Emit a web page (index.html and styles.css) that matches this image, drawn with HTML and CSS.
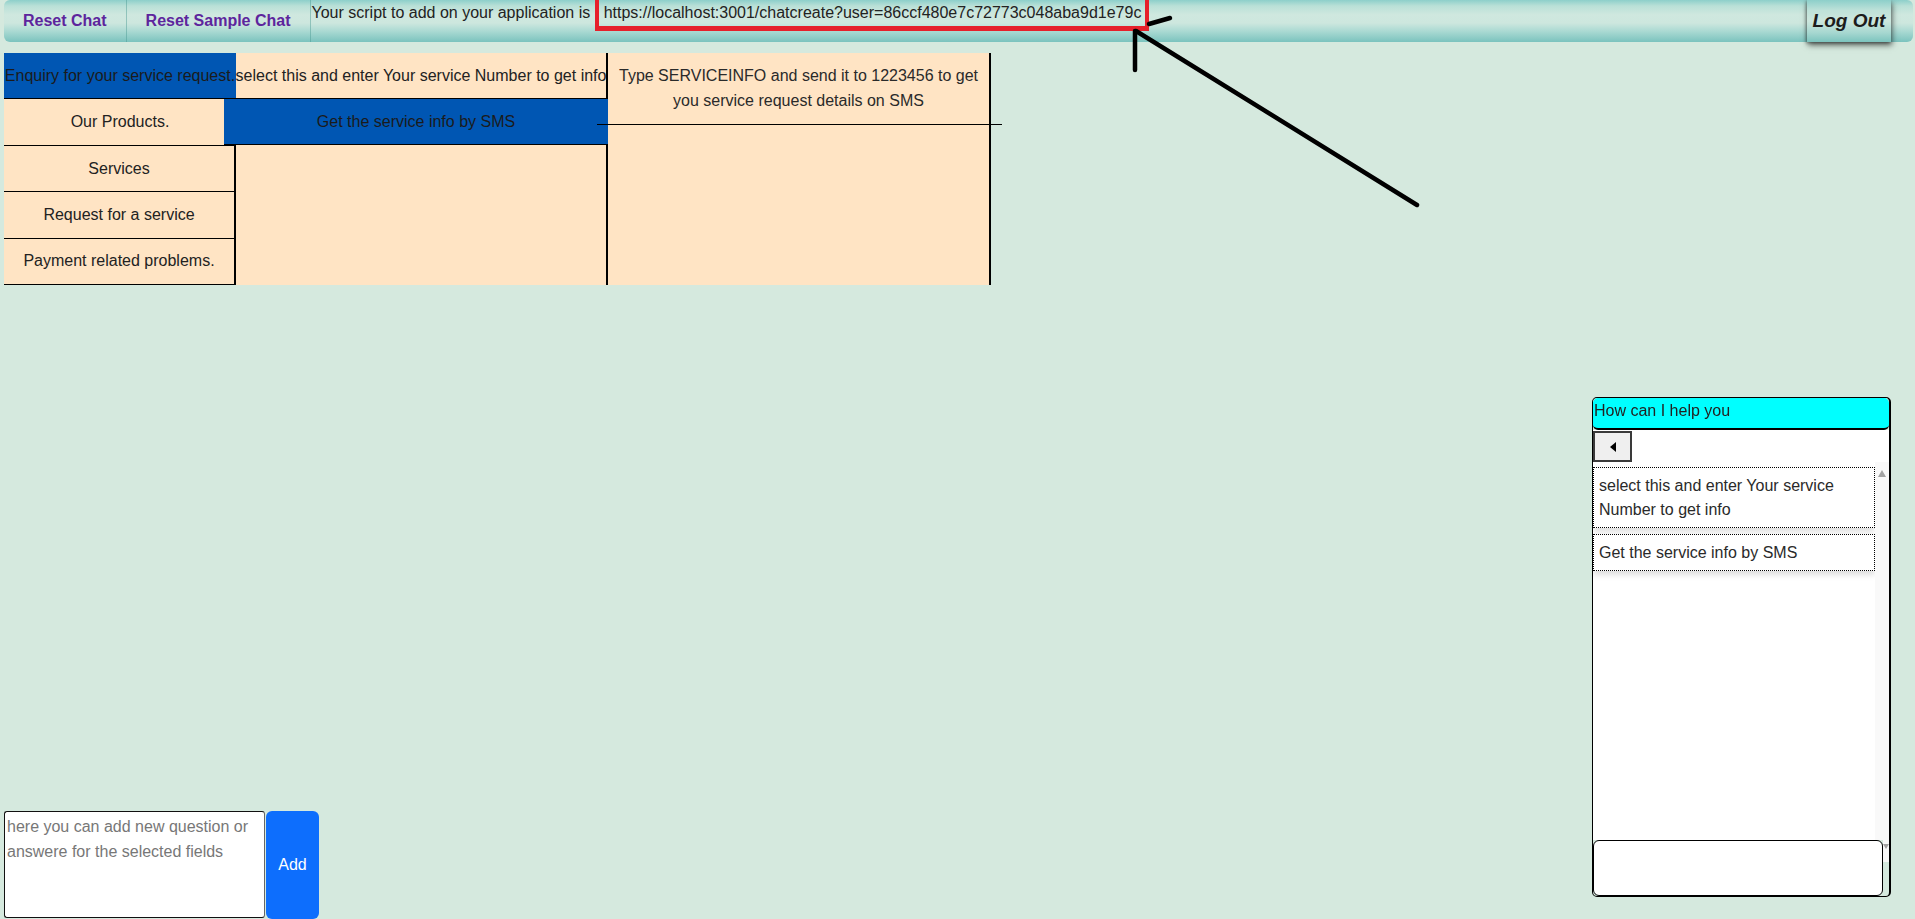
FILE: index.html
```
<!DOCTYPE html>
<html lang="en">
<head>
<meta charset="utf-8">
<title>Chat builder</title>
<link rel="stylesheet" href="styles.css">
</head>
<body>
<div class="page">
  <header class="topbar">
    <button class="tab" type="button">Reset Chat</button>
    <button class="tab" type="button">Reset Sample Chat</button>
    <div class="script-info">Your script to add on your application is <span class="script-url">https://localhost:3001/chatcreate?user=86ccf480e7c72773c048aba9d1e79c</span></div>
    <button class="logout" type="button">Log Out</button>
  </header>

  <main class="builder">
    <div class="col col-1">
      <div class="cell selected">Enquiry for your service request.</div>
      <div class="cell">Our Products.</div>
      <div class="cell edge">Services</div>
      <div class="cell edge">Request for a service</div>
      <div class="cell edge">Payment related problems.</div>
    </div>
    <div class="col col-2">
      <div class="cell">select this and enter Your service Number to get info</div>
      <div class="cell selected wide">Get the service info by SMS</div>
      <div class="filler"></div>
    </div>
    <div class="col col-3">
      <div class="answer">Type SERVICEINFO and send it to 1223456 to get you service request details on SMS</div>
      <div class="rule"></div>
    </div>
  </main>

  <form class="add-form">
    <textarea class="add-input" placeholder="here you can add new question or answere for the selected fields"></textarea>
    <button class="add-btn" type="button">Add</button>
  </form>
</div>

<aside class="chat">
  <div class="chat-head">How can I help you</div>
  <div class="chat-nav">
    <button class="back" type="button"><svg width="6" height="10" viewBox="0 0 6 10"><path d="M6 0 L0 5 L6 10 Z" fill="#000"/></svg></button>
  </div>
  <div class="chat-body">
    <div class="chat-list">
      <div class="chat-item">select this and enter Your service Number to get info</div>
      <div class="chat-item">Get the service info by SMS</div>
    </div>
    <div class="chat-scroll"><span class="arrow-up"></span></div>
  </div>
  <div class="chat-input">
    <textarea class="chat-text"></textarea>
    <div class="scroll-tail"><span class="arrow-down"></span></div>
  </div>
</aside>

<svg class="annotation" width="1915" height="919" viewBox="0 0 1915 919">
  <g stroke="#000" stroke-width="4.5" stroke-linecap="round" fill="none">
    <path d="M1136 31 L1417 205"/>
    <path d="M1135 31 L1135 70"/>
    <path d="M1149 24 L1170 18"/>
  </g>
</svg>
</body>
</html>
```

FILE: styles.css
```
* { box-sizing: border-box; }

html, body {
  margin: 0;
  padding: 0;
}

body {
  background: #d5e9de;
  font-family: "Liberation Sans", Arial, sans-serif;
  font-size: 16px;
  color: #222;
  overflow: hidden;
}

.page {
  height: 100vh;
  display: flex;
  flex-direction: column;
  padding: 0 2px 0 4px;
}

/* ---------- top bar ---------- */
.topbar {
  height: 42px;
  flex: none;
  display: flex;
  align-items: stretch;
  border-radius: 6px;
  background: linear-gradient(to bottom, #8dcfca 0%, #b9e0d7 14%, #cfe8df 35%, #cde7de 55%, #a9d9d2 75%, #7bc3be 100%);
}

.tab {
  background: transparent;
  border: 0;
  border-right: 1px solid rgba(70, 150, 144, 0.45);
  padding: 0 19px;
  font-family: inherit;
  font-size: 16px;
  font-weight: bold;
  color: #5d259d;
  cursor: pointer;
}

.script-info {
  align-self: flex-start;
  white-space: nowrap;
  line-height: 18px;
  padding-left: 1px;
}

.script-url {
  display: inline-block;
  border: 4px solid #e6202b;
  border-top: 0;
  border-bottom-width: 5px;
  padding: 4px 4px 4px 5px;
  line-height: 18px;
}

.logout {
  margin-left: auto;
  margin-right: 22px;
  width: 84px;
  border: 0;
  padding: 0;
  font-family: inherit;
  font-size: 19px;
  font-weight: bold;
  font-style: italic;
  color: #1c1c1c;
  background: linear-gradient(to bottom, #8dcfca 0%, #bfe2d9 25%, #cde7de 50%, #a6d7d0 78%, #7cc4be 100%);
  box-shadow: 1px 3px 6px rgba(0, 0, 0, 0.6), -1px 1px 3px rgba(0, 0, 0, 0.35);
}

/* ---------- builder columns ---------- */
.builder {
  flex: none;
  display: flex;
  height: 232px;
  margin-top: 11px;
}

.col {
  display: flex;
  flex-direction: column;
  background: #ffe4c4;
}

.col-1 { width: 232px; }

.col-2 {
  width: 372px;
  border-right: 2px solid #000;
}

.col-3 {
  width: 383px;
  border-right: 2px solid #000;
}

.cell {
  display: flex;
  align-items: center;
  justify-content: center;
  white-space: nowrap;
  border-bottom: 1px solid #000;
  background: #ffe4c4;
  color: #222;
}

.col-1 .cell { flex: 1; }
.col-2 .cell { height: 46px; flex: none; }

.cell.edge { border-right: 2px solid #000; }

.cell.selected {
  background: #0056b3;
  color: #1b1b1b;
}

.cell.wide {
  margin-left: -12px;
  margin-right: -2px;
}

.filler {
  flex: 1;
}

.answer {
  text-align: center;
  line-height: 25px;
  padding: 10px 8px 11px;
  color: #2a2a2a;
}

.rule {
  height: 1px;
  background: #000;
  margin: 0 -13px 0 -11px;
}

/* ---------- add form ---------- */
.add-form {
  margin-top: auto;
  display: flex;
  height: 108px;
  flex: none;
}

.add-input {
  width: 261px;
  height: 107px;
  border: 1px solid #111;
  border-right-color: #666;
  border-radius: 3px;
  padding: 2px;
  font-family: "Liberation Sans", Arial, sans-serif;
  font-size: 16px;
  line-height: 25px;
  resize: none;
  background: #fff;
}

.add-input::placeholder { color: #777; }

.add-btn {
  width: 53px;
  margin-left: 1px;
  border: 0;
  border-radius: 6px;
  background: #0d6efd;
  color: #fff;
  font-family: inherit;
  font-size: 16px;
}

/* ---------- chat widget ---------- */
.chat {
  position: fixed;
  right: 24px;
  bottom: 22px;
  width: 299px;
  height: 500px;
  border: 1px solid #000;
  border-right-width: 2px;
  border-radius: 5px;
  display: flex;
  flex-direction: column;
  overflow: hidden;
}

.chat-head {
  height: 32px;
  flex: none;
  background: #00ffff;
  border-bottom: 2px solid #000;
  border-radius: 5px;
  line-height: 26px;
  padding-left: 1px;
  color: #222;
}

.chat-nav {
  flex: none;
  background: #fff;
  padding-top: 1px;
}

.back {
  display: flex;
  align-items: center;
  justify-content: center;
  width: 39px;
  height: 31px;
  border: 2px solid #3a3a3a;
  background: #efefef;
  padding: 0;
}

.chat-body {
  flex: 1;
  display: flex;
  min-height: 0;
  background: #fff;
}

.chat-list {
  flex: 1;
  padding-top: 5px;
}

.chat-item {
  border: 1px dotted #000;
  padding: 6px 5px 5px;
  line-height: 24px;
  background: #fff;
  color: #2a2a2a;
  margin-bottom: 6px;
  box-shadow: 0 4px 6px rgba(0, 0, 0, 0.13);
}

.chat-scroll {
  width: 14px;
  flex: none;
  background: #f9f9f9;
  display: flex;
  justify-content: center;
  padding-top: 8px;
}

.arrow-up {
  width: 0;
  height: 0;
  border-left: 4.5px solid transparent;
  border-right: 4.5px solid transparent;
  border-bottom: 7px solid #a3a3a3;
}

.chat-input {
  flex: none;
  display: flex;
  height: 56px;
}

.chat-text {
  width: 292px;
  height: 56px;
  border: 1px solid #000;
  border-radius: 6px;
  background: #fff;
  resize: none;
  font-family: inherit;
  font-size: 16px;
}

.scroll-tail {
  flex: 1;
  height: 22px;
  background: #f9f9f9;
  display: flex;
  justify-content: center;
  padding-top: 4px;
}

.arrow-down {
  width: 0;
  height: 0;
  border-left: 3px solid transparent;
  border-right: 3px solid transparent;
  border-top: 5px solid #a3a3a3;
}

/* ---------- annotation overlay ---------- */
.annotation {
  position: absolute;
  left: 0;
  top: 0;
  pointer-events: none;
}
```
